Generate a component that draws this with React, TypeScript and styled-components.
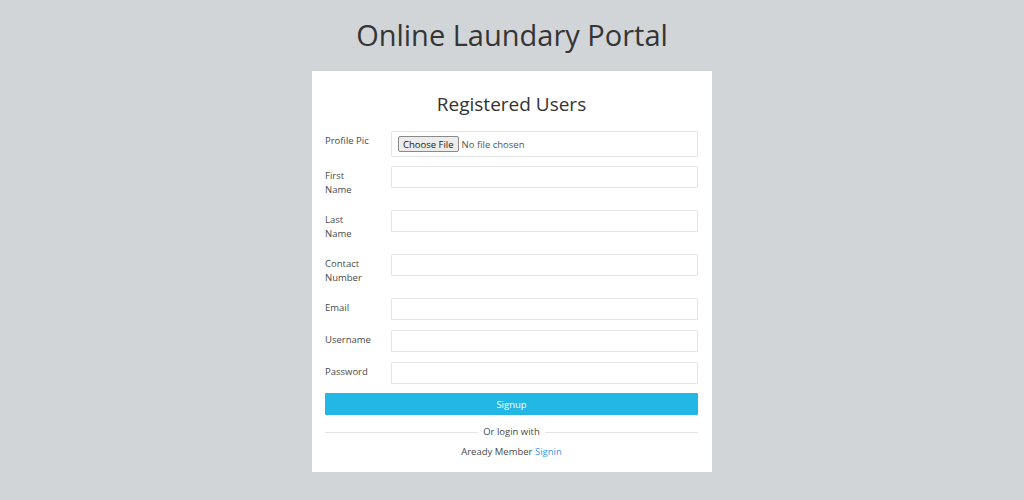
import React from "react";
import styled, { createGlobalStyle } from "styled-components";

const GlobalStyle = createGlobalStyle`
  html, body {
    margin: 0;
    padding: 0;
  }
  body {
    background: #d1d5d8;
    font-family: "Open Sans", "Liberation Sans", sans-serif;
    color: #555;
  }
  * { box-sizing: border-box; }
`;

const Page = styled.div`
  min-height: 498px;
  display: flex;
  flex-direction: column;
  align-items: center;
`;

const SiteTitle = styled.h1`
  margin: 0;
  height: 71px;
  display: flex;
  align-items: center;
  justify-content: center;
  font-size: 29px;
  font-weight: 400;
  color: #353535;
  padding-bottom: 2px;
`;

const Card = styled.div`
  width: 400px;
  background: #fff;
  padding: 20px 14px 13px 13px;
`;

const CardTitle = styled.h2`
  margin: 0 0 14px;
  text-align: center;
  font-size: 19px;
  line-height: 26px;
  font-weight: 400;
  color: #333;
`;

const Row = styled.div<{ $mb?: number }>`
  display: grid;
  grid-template-columns: 47px 1fr;
  column-gap: 19px;
  margin-bottom: ${(p) => p.$mb ?? 10}px;
`;

const Label = styled.label`
  font-size: 9.5px;
  line-height: 14px;
  padding: 3px 0;
  color: #4a4a4a;
`;

const TextInput = styled.input`
  height: 22px;
  width: 100%;
  border: 1px solid #e3e6e8;
  border-radius: 1px;
  padding: 0 6px;
  font-family: inherit;
  font-size: 10px;
  outline: none;
`;

const FileInput = styled.input`
  height: 26px;
  width: 100%;
  border: 1px solid #e3e6e8;
  border-radius: 1px;
  padding: 4px 6px;
  font-family: "Open Sans", "Liberation Sans", sans-serif;
  font-size: 9.5px;
  color: #555;
  &::file-selector-button {
    font-family: "Open Sans", "Liberation Sans", sans-serif;
    font-size: 9.5px;
    color: #222;
    background: #ececec;
    border: 1px solid #8a8a8a;
    border-radius: 2px;
    padding: 0 4px;
    height: 16px;
    margin-right: 3px;
  }
`;

const SubmitButton = styled.button`
  display: block;
  width: 100%;
  height: 22px;
  border: none;
  border-radius: 1px;
  background: #23b7e5;
  color: #fff;
  font-family: inherit;
  font-size: 9.5px;
  cursor: pointer;
`;

const Divider = styled.div`
  display: flex;
  align-items: center;
  gap: 5px;
  margin-top: 10px;
  font-size: 9.5px;
  line-height: 14px;
  color: #4a4a4a;
  &::before, &::after {
    content: "";
    flex: 1;
    border-top: 1px solid #e2e4e6;
  }
`;

const Footer = styled.p`
  margin: 6px 0 0;
  text-align: center;
  font-size: 9.5px;
  line-height: 14px;
  color: #4a4a4a;
`;

const Link = styled.a`
  color: #3a9ae6;
  text-decoration: none;
`;

const fields: { label: string; type: string }[] = [
  { label: "First Name", type: "text" },
  { label: "Last Name", type: "text" },
  { label: "Contact Number", type: "text" },
  { label: "Email", type: "email" },
  { label: "Username", type: "text" },
  { label: "Password", type: "password" },
];

export default function App() {
  return (
    <>
      <GlobalStyle />
      <Page>
        <SiteTitle>Online Laundary Portal</SiteTitle>
        <Card>
          <CardTitle>Registered Users</CardTitle>
          <Row $mb={9}>
            <Label>Profile Pic</Label>
            <FileInput type="file" />
          </Row>
          {fields.map((f, i) => (
            <Row key={f.label} $mb={i === fields.length - 1 ? 9 : 10}>
              <Label>{f.label}</Label>
              <TextInput type={f.type} />
            </Row>
          ))}
          <SubmitButton type="button">Signup</SubmitButton>
          <Divider>Or login with</Divider>
          <Footer>
            Aready Member <Link href="#">Signin</Link>
          </Footer>
        </Card>
      </Page>
    </>
  );
}
